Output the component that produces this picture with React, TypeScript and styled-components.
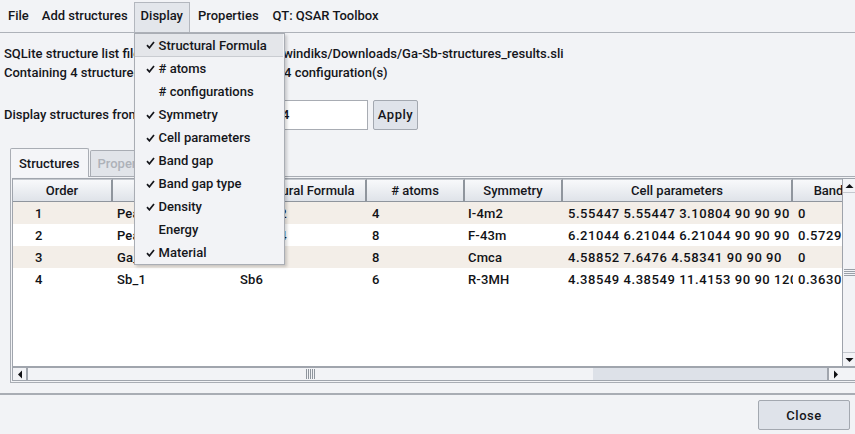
import React from "react";
import styled, { createGlobalStyle } from "styled-components";

const GlobalStyle = createGlobalStyle`
  html, body {
    margin: 0;
    padding: 0;
  }
  body {
    background: #f2f3f6;
    font-family: Roboto, "Liberation Sans", sans-serif;
    font-size: 13px;
    font-weight: 500;
    color: #15161b;
    overflow: hidden;
  }
`;

// numeric columns get a little tracking: the app draws digits on whole pixels
const columns = [
  { title: "Order", width: 100, pad: 22, num: false },
  { title: "Name", width: 123, pad: 4, num: false },
  { title: "Structural Formula", width: 131, pad: 4, num: false },
  { title: "# atoms", width: 98, pad: 5, num: true },
  { title: "Symmetry", width: 98, pad: 3, num: false },
  { title: "Cell parameters", width: 230, pad: 5, num: true },
  { title: "Band gap", width: 98, pad: 5, num: true },
  { title: "Band gap type", width: 110, pad: 5, num: false },
  { title: "Density", width: 90, pad: 5, num: true },
];

const rows = [
  ["1", "Pearson_1", "Ga2Sb2", "4", "I-4m2", "5.55447 5.55447 3.10804 90 90 90", "0", "direct", "5.61"],
  ["2", "Pearson_2", "Ga4Sb4", "8", "F-43m", "6.21044 6.21044 6.21044 90 90 90", "0.572953", "direct", "5.62"],
  ["3", "Ga_1", "Ga8", "8", "Cmca", "4.58852 7.6476 4.58341 90 90 90", "0", "none", "6.09"],
  ["4", "Sb_1", "Sb6", "6", "R-3MH", "4.38549 4.38549 11.4153 90 90 120", "0.363071", "indirect", "6.69"],
];

const menuEntries = [
  { label: "Structural Formula", checked: true },
  { label: "# atoms", checked: true },
  { label: "# configurations", checked: false },
  { label: "Symmetry", checked: true },
  { label: "Cell parameters", checked: true },
  { label: "Band gap", checked: true },
  { label: "Band gap type", checked: true },
  { label: "Density", checked: true },
  { label: "Energy", checked: false },
  { label: "Material", checked: true },
];

const Window = styled.div`
  position: relative;
  width: 855px;
  height: 434px;
  display: flex;
  flex-direction: column;
  overflow: hidden;
`;

const MenuBar = styled.div`
  height: 33px;
  box-sizing: border-box;
  display: flex;
  align-items: stretch;
  padding: 2px 0 0 1px;
  border-bottom: 1px solid #aeb2b9;
`;

const MenuItem = styled.div<{ $open?: boolean; $lead?: number }>`
  position: relative;
  display: flex;
  align-items: center;
  padding: 0 6px 4px ${(p) => p.$lead ?? (p.$open ? 6 : 7)}px;
  background: ${(p) => (p.$open ? "#e3e6eb" : "transparent")};
  border: ${(p) => (p.$open ? "1px solid #b3b7be" : "none")};
  border-bottom: none;
  white-space: nowrap;
`;

const Dropdown = styled.div`
  position: absolute;
  left: -1px;
  top: 30px;
  width: 151px;
  box-sizing: border-box;
  background: #f2f3f6;
  border: 1px solid #a9adb4;
  box-shadow: 2px 2px 3px rgba(0, 0, 0, 0.18);
  z-index: 10;
`;

const DropItem = styled.div<{ $hover?: boolean }>`
  height: 23px;
  display: flex;
  align-items: center;
  padding-left: 11px;
  margin-right: 1px;
  background: ${(p) => (p.$hover ? "#e4e6ea" : "transparent")};
  border-bottom: ${(p) => (p.$hover ? "1px solid #c9ccd1" : "none")};
  box-sizing: border-box;
`;

const CheckSlot = styled.span`
  width: 13px;
  display: flex;
  align-items: center;
`;

const Body = styled.div`
  padding: 0 0 0 4px;
`;

const InfoBlock = styled.div`
  margin-top: 11px;
  line-height: 19px;
  white-space: nowrap;
`;

const RangeRow = styled.div`
  margin-top: 17px;
  width: 414px;
  height: 31px;
  display: flex;
  align-items: center;
`;

const Field = styled.div`
  margin-left: auto;
  width: 90px;
  height: 30px;
  box-sizing: border-box;
  background: #ffffff;
  border: 1px solid #a8acb3;
  display: flex;
  align-items: center;
  padding-left: 3px;
`;

const Button = styled.div<{ $w: number; $h: number }>`
  width: ${(p) => p.$w}px;
  height: ${(p) => p.$h}px;
  box-sizing: border-box;
  background: #dfe3ea;
  border: 1px solid #a3a8b0;
  border-radius: 2px;
  display: flex;
  align-items: center;
  justify-content: center;
  letter-spacing: 0.5px;
`;

const Tabs = styled.div`
  margin: 17px 0 0 10px;
`;

const TabBar = styled.div`
  display: flex;
  align-items: flex-end;
  height: 29px;
`;

const Tab = styled.div<{ $active?: boolean }>`
  height: ${(p) => (p.$active ? 29 : 26)}px;
  box-sizing: border-box;
  padding: 0 8px 0 ${(p) => (p.$active ? 8 : 7)}px;
  display: flex;
  align-items: center;
  border: 1px solid #a9adb4;
  border-bottom: none;
  border-radius: 2px 2px 0 0;
  background: ${(p) => (p.$active ? "#f4f5f8" : "#e1e4e9")};
  color: ${(p) => (p.$active ? "#15161b" : "#aeb2b9")};
  margin-right: 1px;
  margin-bottom: ${(p) => (p.$active ? -1 : 0)}px;
  position: relative;
`;

const TabPanel = styled.div`
  border: 1px solid #a9adb4;
  border-right: none;
  padding: 1px 0 1px 1px;
`;

const ScrollPane = styled.div`
  border: 1px solid #a0a5ad;
  border-right: none;
  display: grid;
  grid-template-columns: 829px 14px;
  grid-template-rows: 187px 14px;
  background: #ffffff;
`;

const Viewport = styled.div`
  overflow: hidden;
  background: #ffffff;
`;

const HeaderRow = styled.div`
  display: flex;
  height: 23px;
`;

const HeaderCell = styled.div<{ $w: number }>`
  flex: 0 0 ${(p) => p.$w}px;
  box-sizing: border-box;
  height: 23px;
  display: flex;
  align-items: center;
  justify-content: center;
  background: linear-gradient(#f8f9fb, #dfe3e9);
  border-top: 1px solid #c4c8ce;
  border-right: 2px solid #8f959d;
  border-bottom: 1px solid #8f959d;
  white-space: nowrap;
  overflow: hidden;
`;

const Row = styled.div<{ $alt?: boolean }>`
  display: flex;
  height: 22px;
  background: ${(p) => (p.$alt ? "#f3eee8" : "#ffffff")};
`;

const Cell = styled.div<{ $w: number; $pad: number; $num?: boolean }>`
  flex: 0 0 ${(p) => p.$w}px;
  box-sizing: border-box;
  padding-left: ${(p) => p.$pad}px;
  display: flex;
  align-items: center;
  white-space: nowrap;
  overflow: hidden;
  color: #111216;
  letter-spacing: ${(p) => (p.$num ? 0.55 : 0.15)}px;
`;

const VBar = styled.div`
  display: flex;
  flex-direction: column;
  border-left: 1px solid #9ea3ab;
  background: #f2f3f6;
`;

const HBar = styled.div`
  display: flex;
  border-top: 2px solid #a0a5ad;
  background: #f2f3f6;
`;

const Corner = styled.div`
  border-top: 2px solid #a0a5ad;
  background: #f2f3f6;
`;

const ArrowBtn = styled.div<{ $side: "start" | "end"; $vertical?: boolean }>`
  flex: 0 0 13px;
  display: flex;
  align-items: center;
  justify-content: center;
  ${(p) =>
    p.$vertical
      ? `border-${p.$side === "start" ? "bottom" : "top"}: 1px solid #c4c8ce;`
      : `border-${p.$side === "start" ? "right" : "left"}: 2px solid #a0a5ad;`}
`;

const Thumb = styled.div`
  flex: 1 1 auto;
  display: flex;
  align-items: center;
  justify-content: center;
  background: #f2f3f6;
`;

const Track = styled.div`
  flex: 0 0 234px;
  background: #dde1e8;
`;

const Footer = styled.div`
  margin-top: 10px;
  border-top: 2px solid #a9adb4;
  display: flex;
  justify-content: flex-end;
  padding: 5px 5px 0 0;
`;

const Check = () => (
  <svg width="9" height="8" viewBox="0 0 9 8">
    <polyline points="1,4.2 3.4,6.8 8,1" fill="none" stroke="#15161b" strokeWidth="1.7" />
  </svg>
);

const Arrow = ({ dir }: { dir: "up" | "down" | "left" | "right" }) => {
  const pts = {
    up: "0,5 4,1 8,5",
    down: "0,1 8,1 4,5",
    left: "5,0 5,8 1,4",
    right: "1,0 1,8 5,4",
  }[dir];
  const vertical = dir === "up" || dir === "down";
  return (
    <svg width={vertical ? 9 : 6} height={vertical ? 6 : 9} viewBox={vertical ? "0 0 8 6" : "0 0 6 8"}>
      <polygon points={pts} fill="#101114" />
    </svg>
  );
};

const Grip = ({ vertical }: { vertical?: boolean }) => (
  <svg width={vertical ? 11 : 10} height={vertical ? 8 : 10}>
    {[0, 1, 2, 3, 4].map((i) =>
      vertical ? (
        <line key={i} x1="0" x2="11" y1={0.5 + i * 2} y2={0.5 + i * 2} stroke="#9aa0a8" />
      ) : (
        <line key={i} y1="0" y2="10" x1={0.5 + i * 2} x2={0.5 + i * 2} stroke="#8f959d" />
      )
    )}
  </svg>
);

export default function App() {
  return (
    <Window>
      <GlobalStyle />
      <MenuBar>
        <MenuItem>File</MenuItem>
        <MenuItem>Add structures</MenuItem>
        <MenuItem $open>
          Display
          <Dropdown>
            {menuEntries.map((m, i) => (
              <DropItem key={m.label} $hover={i === 0}>
                <CheckSlot>{m.checked && <Check />}</CheckSlot>
                {m.label}
              </DropItem>
            ))}
          </Dropdown>
        </MenuItem>
        <MenuItem $lead={8}>Properties</MenuItem>
        <MenuItem $lead={8}>QT: QSAR Toolbox</MenuItem>
      </MenuBar>

      <Body>
        <InfoBlock>
          <div>SQLite structure list file: /home/uadmin2/users/windiks/Downloads/Ga-Sb-structures_results.sli</div>
          <div>Containing 4 structure(s) with an overall total of 4 configuration(s)</div>
        </InfoBlock>

        <RangeRow>
          <span>Display structures from 1 to</span>
          <Field>4</Field>
          <Button $w={45} $h={30} style={{ marginLeft: 5 }}>
            Apply
          </Button>
        </RangeRow>
      </Body>

      <Tabs>
        <TabBar>
          <Tab $active>Structures</Tab>
          <Tab>Properties</Tab>
        </TabBar>
        <TabPanel>
          <ScrollPane>
            <Viewport>
              <HeaderRow>
                {columns.map((c) => (
                  <HeaderCell key={c.title} $w={c.width}>
                    {c.title}
                  </HeaderCell>
                ))}
              </HeaderRow>
              {rows.map((r, i) => (
                <Row key={r[0]} $alt={i % 2 === 0}>
                  {r.map((v, j) => (
                    <Cell key={j} $w={columns[j].width} $pad={columns[j].pad} $num={columns[j].num}>
                      {v}
                    </Cell>
                  ))}
                </Row>
              ))}
            </Viewport>
            <VBar>
              <ArrowBtn $side="start" $vertical>
                <Arrow dir="up" />
              </ArrowBtn>
              <Thumb>
                <Grip vertical />
              </Thumb>
              <ArrowBtn $side="end" $vertical>
                <Arrow dir="down" />
              </ArrowBtn>
            </VBar>
            <HBar>
              <ArrowBtn $side="start">
                <Arrow dir="left" />
              </ArrowBtn>
              <Thumb>
                <Grip />
              </Thumb>
              <Track />
              <ArrowBtn $side="end">
                <Arrow dir="right" />
              </ArrowBtn>
            </HBar>
            <Corner />
          </ScrollPane>
        </TabPanel>
      </Tabs>

      <Footer>
        <Button $w={92} $h={30}>Close</Button>
      </Footer>
    </Window>
  );
}
